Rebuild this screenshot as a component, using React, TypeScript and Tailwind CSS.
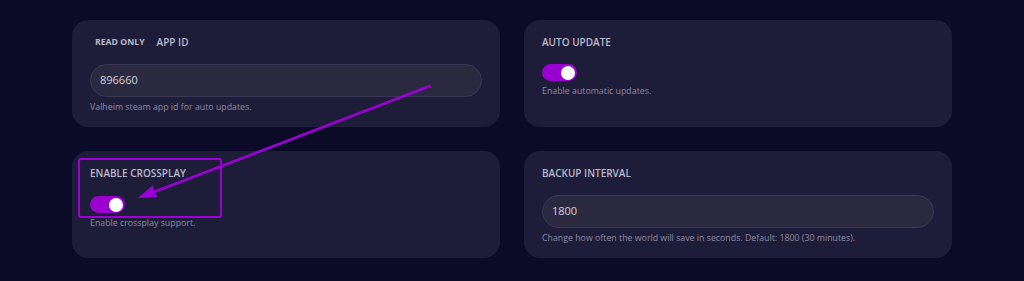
import React from "react";

function Toggle() {
  return (
    <div className="flex h-[17px] w-[35px] items-center justify-end rounded-full bg-[#9a00cf] pr-[2px]">
      <div className="h-[14px] w-[14px] rounded-full bg-white" />
    </div>
  );
}

function TextInput({ value }: { value: string }) {
  return (
    <div className="flex h-[33px] items-center rounded-full border border-[#3a3955] bg-[#2a2940] px-[9px] text-[11px] text-[#d2d1de]">
      {value}
    </div>
  );
}

function Card({ children }: { children: React.ReactNode }) {
  return (
    <div className="flex h-[107px] flex-col rounded-2xl bg-[#1e1d39] px-[18px] pt-[15px]">
      {children}
    </div>
  );
}

function Label({ children }: { children: React.ReactNode }) {
  return (
    <div className="flex h-[15px] items-center text-[10px] font-semibold uppercase leading-[15px] text-[#b9b8cc]">
      {children}
    </div>
  );
}

function Help({ children }: { children: React.ReactNode }) {
  return <p className="text-[8.8px] leading-[12px] text-[#8b8aa3]">{children}</p>;
}

export default function App() {
  return (
    <div
      className="relative h-[281px] w-full overflow-hidden bg-[#0c0b27]"
      style={{ fontFamily: '"Open Sans", "Noto Sans", sans-serif' }}
    >
      <div className="grid grid-cols-2 gap-6 px-[72px] pt-5">
        <Card>
          <Label>
            <span className="px-[5px] text-[8.7px] font-bold text-[#b9b8cc]">Read only</span>
            <span className="ml-[7px]">App ID</span>
          </Label>
          <div className="mt-[14px]">
            <TextInput value="896660" />
          </div>
          <div className="mt-[4px]">
            <Help>Valheim steam app id for auto updates.</Help>
          </div>
        </Card>

        <Card>
          <Label>Auto Update</Label>
          <div className="mt-[14px]">
            <Toggle />
          </div>
          <div className="mt-[4px]">
            <Help>Enable automatic updates.</Help>
          </div>
        </Card>

        <Card>
          <Label>Enable Crossplay</Label>
          <div className="mt-[15px]">
            <Toggle />
          </div>
          <div className="mt-[4px]">
            <Help>Enable crossplay support.</Help>
          </div>
        </Card>

        <Card>
          <Label>Backup Interval</Label>
          <div className="mt-[14px]">
            <TextInput value="1800" />
          </div>
          <div className="mt-[4px]">
            <Help>Change how often the world will save in seconds. Default: 1800 (30 minutes).</Help>
          </div>
        </Card>
      </div>

      {/* annotation overlay */}
      <div className="pointer-events-none absolute left-[78px] top-[158px] h-[60px] w-[144px] rounded-[3px] border-2 border-[#a000d8]" />
      <svg className="pointer-events-none absolute inset-0" width="1024" height="281">
        <line x1="430" y1="86" x2="150" y2="193.5" stroke="#9d00d6" strokeWidth="2.5" strokeLinecap="round" />
        <polygon points="138,198 158,197 154,191.5 153,185" fill="#9d00d6" />
      </svg>
    </div>
  );
}
